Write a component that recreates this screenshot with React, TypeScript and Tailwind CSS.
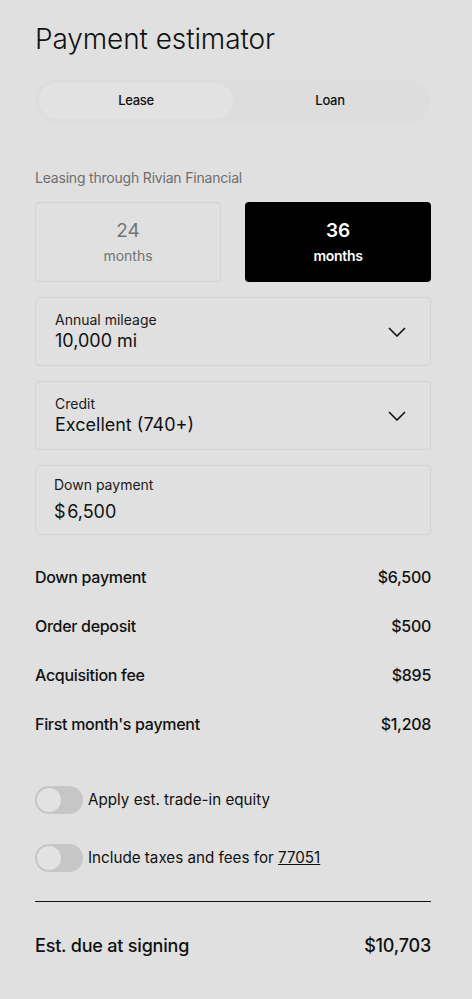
import React from 'react';

const rows = [
  { label: 'Down payment', value: '$6,500' },
  { label: 'Order deposit', value: '$500' },
  { label: 'Acquisition fee', value: '$895' },
  { label: "First month's payment", value: '$1,208' },
];

function Chevron() {
  return (
    <svg width="18" height="10" viewBox="0 0 18 10" fill="none" className="text-[#111]">
      <path d="M1 1l8 8 8-8" stroke="currentColor" strokeWidth="1.6" />
    </svg>
  );
}

function Toggle() {
  return (
    <div className="w-[48px] h-[28px] rounded-full bg-[#c6c6c6] p-[2px] flex items-center shrink-0">
      <div className="w-[24px] h-[24px] rounded-full bg-[#e2e2e2]" />
    </div>
  );
}

function SelectBox({ label, value }: { label: string; value: string }) {
  return (
    <div className="h-[69px] border border-[#d3d3d3] rounded-[4px] pl-[19px] pr-[24px] flex items-center justify-between">
      <div className="flex flex-col">
        <span className="text-[14px] leading-[18px] text-[#1a1a1a]">{label}</span>
        <span className="text-[18px] leading-[24px] text-[#111]">{value}</span>
      </div>
      <Chevron />
    </div>
  );
}

export default function App() {
  const [term, setTerm] = React.useState(36);
  const [mode, setMode] = React.useState('Lease');

  return (
    <div className="min-h-[999px] bg-[#e0e0e0] text-[#111]" style={{ fontFamily: 'Inter, "Noto Sans", sans-serif' }}>
      <div className="w-[396px] ml-[35px] pt-[22px]">
        <h1 className="text-[28px] leading-[34px] font-light tracking-[-0.1px]">Payment estimator</h1>

        {/* Lease / Loan */}
        <div className="mt-[23px] h-[44px] rounded-full bg-[#dddddd] p-[4px] flex">
          {['Lease', 'Loan'].map((m) => (
            <button
              key={m}
              onClick={() => setMode(m)}
              className={
                mode === m
                  ? 'flex-1 rounded-full bg-[#e2e2e2] text-[13px] font-medium tracking-[-0.3px]'
                  : 'flex-1 rounded-full text-[13px] font-medium tracking-[-0.3px]'
              }
            >
              {m}
            </button>
          ))}
        </div>

        <p className="mt-[45px] text-[14px] leading-[20px] text-[#6e6e6e] tracking-[-0.2px]">Leasing through Rivian Financial</p>

        {/* Term */}
        <div className="mt-[14px] grid grid-cols-2 gap-[24px]">
          {[24, 36].map((t) => (
            <button
              key={t}
              onClick={() => setTerm(t)}
              className={
                term === t
                  ? 'h-[80px] rounded-[4px] bg-black text-white flex flex-col items-center justify-center'
                  : 'h-[80px] rounded-[4px] border border-[#d3d3d3] text-[#747474] flex flex-col items-center justify-center'
              }
            >
              <span className={term === t ? 'text-[19px] leading-[24px] font-semibold' : 'text-[19px] leading-[24px]'}>{t}</span>
              <span className={term === t ? 'mt-[3px] text-[14px] leading-[20px] font-semibold tracking-[-0.3px]' : 'mt-[3px] text-[14px] leading-[20px]'}>months</span>
            </button>
          ))}
        </div>

        <div className="mt-[15px] flex flex-col gap-[15px]">
          <SelectBox label="Annual mileage" value="10,000 mi" />
          <SelectBox label="Credit" value="Excellent (740+)" />
          <div className="h-[70px] border border-[#d3d3d3] rounded-[4px] pl-[18px] flex flex-col justify-center">
            <span className="text-[14px] leading-[18px] text-[#1a1a1a]">Down payment</span>
            <span className="mt-[6px] text-[18px] leading-[24px]">$&#8202;6,500</span>
          </div>
        </div>

        {/* Summary */}
        <div className="mt-[32px] flex flex-col gap-[29px]">
          {rows.map((r) => (
            <div key={r.label} className="flex justify-between text-[16px] leading-[20px] font-medium tracking-[-0.3px]">
              <span>{r.label}</span>
              <span>{r.value}</span>
            </div>
          ))}
        </div>

        <div className="mt-[52px] flex flex-col gap-[30px]">
          <label className="flex items-center gap-[5px] text-[15.2px] leading-[28px]">
            <Toggle />
            <span>Apply est. trade-in equity</span>
          </label>
          <label className="flex items-center gap-[5px] text-[15.2px] leading-[28px]">
            <Toggle />
            <span>
              Include taxes and fees for <span className="underline">77051</span>
            </span>
          </label>
        </div>

        <div className="mt-[29px] border-t border-[#111]" />

        <div className="mt-[32px] flex justify-between text-[18px] leading-[24px] font-medium tracking-[-0.2px]">
          <span>Est. due at signing</span>
          <span>$10,703</span>
        </div>
      </div>
    </div>
  );
}
